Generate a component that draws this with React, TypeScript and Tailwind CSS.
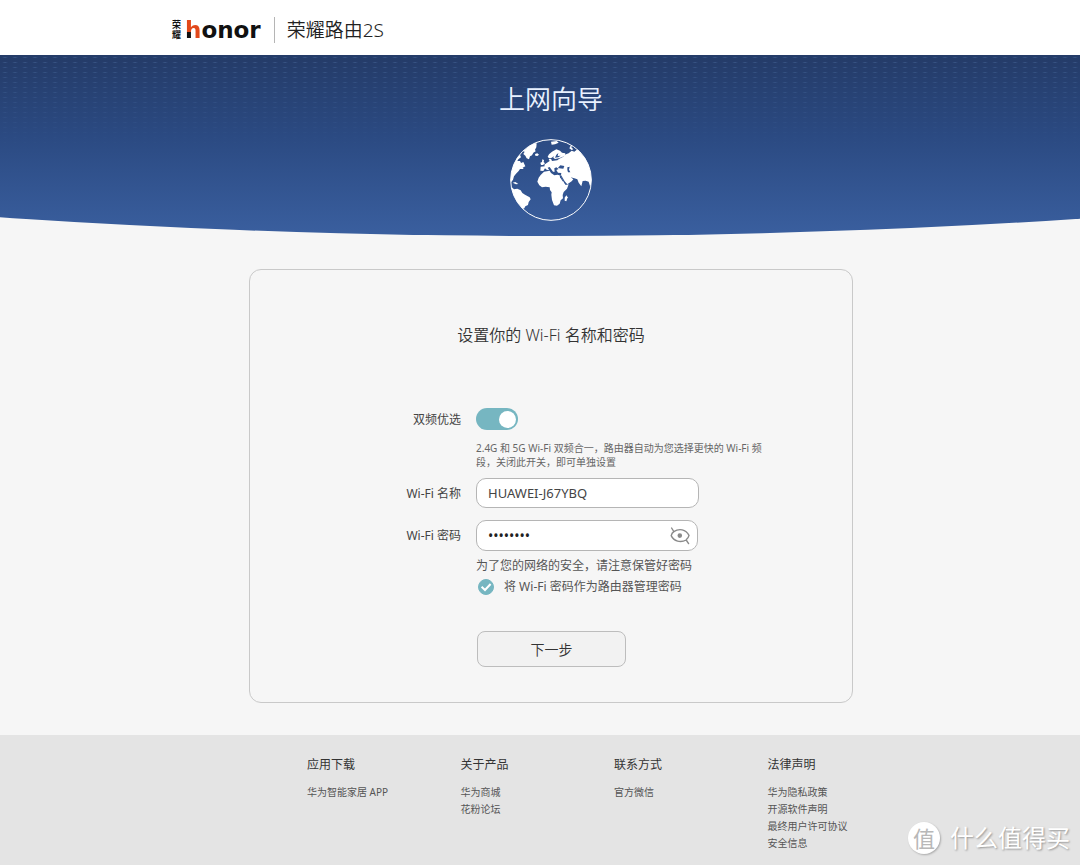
import { useState } from 'react'

const footerColumns = [
  { title: '应用下载', links: ['华为智能家居 APP'] },
  { title: '关于产品', links: ['华为商城', '花粉论坛'] },
  { title: '联系方式', links: ['官方微信'] },
  { title: '法律声明', links: ['华为隐私政策', '开源软件声明', '最终用户许可协议', '安全信息'] },
]

function Header() {
  return (
    <header className="bg-white pl-[22px]">
      <div className="mx-auto flex h-[55px] max-w-[758px] items-center pt-[5px]">
        <a href="#" className="flex items-center text-[#111]" aria-label="荣耀 honor">
          <span className="mr-[3px] w-[10px] text-[9px] leading-[10px] font-bold">荣耀</span>
          <span className="font-['DejaVu_Sans',sans-serif] text-[23px] leading-[26px] font-bold">
            <span className="bg-[conic-gradient(from_180deg_at_42%_58%,#111_90deg,#e2491b_90deg)] bg-clip-text text-transparent">
              h
            </span>
            onor
          </span>
        </a>
        <span className="mr-3 ml-[13px] h-[26px] w-px bg-[#b5b5b5]" />
        <h1 className="text-[19px] leading-[26px] font-[350] text-[#222]">荣耀路由2S</h1>
      </div>
    </header>
  )
}

function Globe() {
  return (
    <svg viewBox="58 191 246 246" className="mt-[22px] size-[82px]" aria-hidden="true">
      <defs>
        <clipPath id="globe">
          <circle cx="181" cy="314" r="121" />
        </clipPath>
      </defs>
      <g clipPath="url(#globe)" fill="#fff">
        {/* Greenland and North America */}
        <path d="M92 226 104 210 120 202 138 204 137 216 133 223 135 228 128 232 124 240 118 243 115 252 108 249 104 241 98 236 102 229Z" />
        <path d="M133 236 140 234 145 238 140 242 134 241Z" />
        <path d="M60 270 76 244 88 238 91 246 83 252 80 257 88 257 91 263 98 260 104 273 96 277 99 281 88 281 84 287 76 295 70 303 67 313 62 320 55 310Z" />
        <path d="M66 322 74 320 83 326 76 327Z" />
        {/* South America */}
        <path d="M62 334 70 342 80 340 90 345 95 353 103 358 117 366 120 372 114 380 112 389 104 393 101 399 94 402 92 408 78 400 58 360Z" />
        {/* Africa */}
        <path d="M150 299 160 289 177 286 181 293 191 300 201 298 211 301 215 312 221 324 225 329 234 327 229 340 219 350 216 359 217 369 210 375 207 385 199 391 190 390 184 374 182 358 183 351 178 344 177 336 165 334 154 336 146 330 140 319 144 307Z" />
        <path d="M227 360 231 366 227 378 222 376 222 367Z" />
        {/* Europe and Asia */}
        <path d="M149 286 150 274 162 273 161 268 168 263 177 257 174 251 181 250 184 257 200 255 206 250 218 244 222 238 234 234 243 226 251 229 260 222 270 226 284 245 304 280 310 320 303 326 298 332 294 319 285 316 276 317 272 333 264 322 260 312 251 309 240 306 248 312 243 318 230 327 222 318 211 299 212 293 202 292 197 284 204 281 197 276 191 279 192 289 187 289 177 275 171 277 176 285 168 283 163 279 158 287Z" />
        <path d="M171 244 175 237 184 229 197 222 208 226 214 232 224 234 222 242 207 248 193 251 188 247 189 242 184 247 175 249Z" />
        <path d="M155 252 160 254 159 260 163 264 157 269 151 269 149 262 154 260Z" />
        <path d="M181 199 198 197 204 202 193 207 183 208Z" />
        <path d="M236 219 240 211 245 208 242 216 248 222 243 224Z" />
      </g>
      <g fill="#315390">
        {/* Baltic, Black, Caspian and Red seas */}
        <path d="M193 247 197 238 203 233 201 242 210 241 203 246Z" />
        <path d="M202 277 209 270 221 272 218 280 205 279Z" />
        <path d="M230 276 237 274 235 283 239 291 232 291 230 284Z" />
        <path d="M207 299 212 303 219 319 216 318 208 306Z" />
      </g>
      <circle cx="181" cy="314" r="121" fill="none" stroke="#fff" strokeWidth="3" />
    </svg>
  )
}

function Hero() {
  return (
    <section className="relative h-[181px] bg-[linear-gradient(#243b68,#2b4a82_45%,#3a5f9f)] pl-[22px] [clip-path:ellipse(200%_567px_at_51%_-386px)]">
      <div className="absolute inset-x-0 top-0 h-[100px] bg-[radial-gradient(ellipse_3px_1px_at_center,rgba(100,140,195,0.35),transparent)] bg-[length:10px_5px] [mask-image:linear-gradient(#000,transparent)]" />
      <div className="relative flex flex-col items-center pt-[27px]">
        <h2 className="text-[26px] leading-[35px] font-[350] text-[#e9f1ff]">上网向导</h2>
        <Globe />
      </div>
    </section>
  )
}

function EyeOff() {
  return (
    <svg viewBox="0 0 20 18" className="h-[18px] w-5" fill="none" stroke="#8a8a8a" strokeWidth="1.4" strokeLinecap="round">
      <path d="M1.6 1 3.8 4.6C9 1.2 15.8 2 19 8.4c-.4 1.6-1.2 2.8-2.4 3.9" />
      <path d="M3.8 4.6C2.4 5.6 1.6 7 1.2 8.6c2.6 5.8 9.4 7.4 15 4.4l2.4 3.6" />
      <circle cx="9.8" cy="8.6" r="1.6" fill="#8a8a8a" />
    </svg>
  )
}

function WifiForm() {
  const [dualBand, setDualBand] = useState(true)
  const [samePassword, setSamePassword] = useState(true)
  const [visible, setVisible] = useState(false)
  const [name, setName] = useState('HUAWEI-J67YBQ')
  const [password, setPassword] = useState('12345678')

  return (
    <form
      onSubmit={(e) => e.preventDefault()}
      className="mx-auto w-full max-w-[604px] rounded-xl border border-[#c9c9c9] pt-[54px] pb-[35px]"
    >
      <h3 className="text-center text-base leading-[22px] font-[350] text-[#333]">设置你的 Wi-Fi 名称和密码</h3>

      <div className="mt-[62px] grid grid-cols-[211px_1fr] items-center gap-x-[15px] text-xs text-[#444]">
        <label htmlFor="dual" className="pt-[2px] text-right">双频优选</label>
        <input
          id="dual"
          type="checkbox"
          role="switch"
          checked={dualBand}
          onChange={(e) => setDualBand(e.target.checked)}
          className="flex h-[22px] w-[42px] cursor-pointer appearance-none items-center rounded-full bg-[#bbb] px-[2px] before:size-[17px] before:rounded-full before:bg-white checked:justify-end checked:bg-[#76b6c1]"
        />

        <p className="col-start-2 mt-[11px] w-[304px] text-[10px] leading-[14px] text-[#666]">
          2.4G 和 5G Wi-Fi 双频合一，路由器自动为您选择更快的 Wi-Fi 频段，关闭此开关，即可单独设置
        </p>

        <label htmlFor="ssid" className="mt-[10px] text-right">Wi-Fi 名称</label>
        <input
          id="ssid"
          type="text"
          value={name}
          onChange={(e) => setName(e.target.value)}
          className="mt-[9px] h-[30px] w-[223px] rounded-[10px] border border-[#b5b5b5] bg-white px-[11px] text-[13px]"
        />

        <label htmlFor="password" className="mt-3 text-right">Wi-Fi 密码</label>
        <div className="mt-3 flex h-[31px] w-[222px] items-center rounded-[10px] border border-[#b5b5b5] bg-white pr-[7px] pl-[11px]">
          <input
            id="password"
            type={visible ? 'text' : 'password'}
            value={password}
            onChange={(e) => setPassword(e.target.value)}
            className="min-w-0 flex-1 bg-transparent text-sm text-[#222] outline-none"
          />
          <button type="button" onClick={() => setVisible(!visible)} className="cursor-pointer" aria-label="显示密码">
            <EyeOff />
          </button>
        </div>

        <p className="col-start-2 mt-[6px] leading-[18px] text-[#555]">为了您的网络的安全，请注意保管好密码</p>

        <label className="col-start-2 mt-[3px] flex cursor-pointer items-center pl-[2px] leading-[18px] text-[#555]">
          <span className="mr-[10px] grid size-4 place-items-center">
            <input
              type="checkbox"
              checked={samePassword}
              onChange={(e) => setSamePassword(e.target.checked)}
              className="col-start-1 row-start-1 size-4 appearance-none rounded-full border border-[#bbb] checked:border-[#76b6c1] checked:bg-[#76b6c1]"
            />
            {samePassword && (
              <svg viewBox="0 0 16 16" className="pointer-events-none col-start-1 row-start-1 size-4" fill="none" stroke="#fff" strokeWidth="2">
                <path d="M3.6 7.8 7 11l5.6-6" />
              </svg>
            )}
          </span>
          将 Wi-Fi 密码作为路由器管理密码
        </label>

        <button
          type="submit"
          className="col-start-2 mt-[35px] ml-px h-9 w-[149px] cursor-pointer rounded-lg border border-[#bdbdbd] bg-[#f2f2f2] pt-px text-sm font-[350] text-[#333]"
        >
          下一步
        </button>
      </div>
    </form>
  )
}

function Footer() {
  return (
    <footer className="flex-1 bg-[#e4e4e4] pt-[21px] pb-[11px] pl-[22px]">
      <div className="mx-auto grid max-w-[758px] grid-cols-4 pr-[9px] pl-[135px]">
        {footerColumns.map((column) => (
          <div key={column.title}>
            <h4 className="text-xs leading-[18px] text-[#333]">{column.title}</h4>
            <ul className="mt-[10px] text-[10px] leading-[17px] text-[#555]">
              {column.links.map((link) => (
                <li key={link}>
                  <a href="#" className="hover:underline">{link}</a>
                </li>
              ))}
            </ul>
          </div>
        ))}
      </div>
    </footer>
  )
}

function Watermark() {
  return (
    <div className="absolute right-[10px] bottom-[11px] flex items-center gap-[10px] text-white">
      <span className="grid size-8 place-items-center rounded-full bg-white text-[22px] leading-8 text-[#b8b8b8] shadow-[1px_1px_2px_rgba(0,0,0,0.25)]">
        值
      </span>
      <span className="text-2xl leading-8 [text-shadow:1px_1px_2px_rgba(0,0,0,0.35)]">什么值得买</span>
    </div>
  )
}

export default function App() {
  return (
    <div className="relative flex min-h-screen flex-col bg-[#f6f6f6] font-['Noto_Sans','Noto_Sans_CJK_SC',sans-serif]">
      <Header />
      <Hero />
      <main className="pt-[33px] pb-8 pl-[22px]">
        <WifiForm />
      </main>
      <Footer />
      <Watermark />
    </div>
  )
}
